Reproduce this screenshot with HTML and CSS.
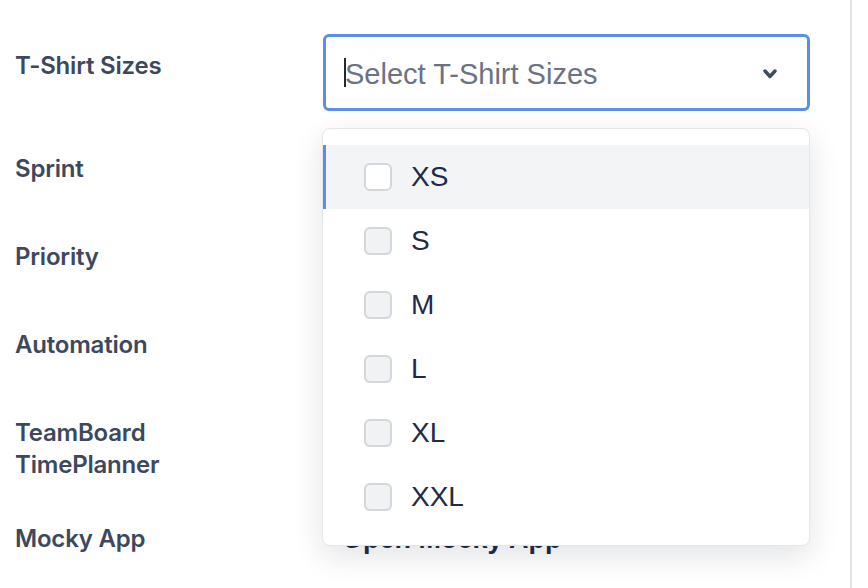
FILE: index.html
```html
<!DOCTYPE html>
<html>
<head>
<meta charset="utf-8">
<link rel="stylesheet" href="styles.css">
</head>
<body>
<div class="page">
  <div class="form">
    <div class="row">
      <div class="label">T-Shirt Sizes</div>
      <div class="field">
        <div class="select">
          <span class="caret"></span>
          <span class="placeholder">Select T-Shirt Sizes</span>
          <svg class="chevron" width="14" height="10" viewBox="0 0 14 10"><path d="M2 2 L7 7.5 L12 2" fill="none" stroke="#3d4a62" stroke-width="3.4" stroke-linecap="round" stroke-linejoin="round"/></svg>
        </div>
        <div class="menu">
          <div class="option active"><span class="box"></span><span class="opt-text">XS</span></div>
          <div class="option"><span class="box"></span><span class="opt-text">S</span></div>
          <div class="option"><span class="box"></span><span class="opt-text">M</span></div>
          <div class="option"><span class="box"></span><span class="opt-text">L</span></div>
          <div class="option"><span class="box"></span><span class="opt-text">XL</span></div>
          <div class="option"><span class="box"></span><span class="opt-text">XXL</span></div>
        </div>
      </div>
    </div>
    <div class="row">
      <div class="label">Sprint</div>
      <div class="field"><div class="blank"></div></div>
    </div>
    <div class="row">
      <div class="label">Priority</div>
      <div class="field"><div class="blank"></div></div>
    </div>
    <div class="row">
      <div class="label">Automation</div>
      <div class="field"><div class="blank"></div></div>
    </div>
    <div class="row">
      <div class="label">TeamBoard<br>TimePlanner</div>
      <div class="field"><div class="blank"></div></div>
    </div>
    <div class="row">
      <div class="label">Mocky App</div>
      <div class="field"><div class="link">Open Mocky App</div></div>
    </div>
  </div>
</div>
</body>
</html>
```

FILE: styles.css
```css
html, body {
  margin: 0;
  padding: 0;
  background: #ffffff;
}
body {
  width: 868px;
  height: 588px;
  overflow: hidden;
}
.page {
  width: 850px;
  height: 588px;
  border-right: 2px solid #e2e2e2;
  box-sizing: content-box;
}
.form {
  padding: 34px 0 0 15px;
}
.row {
  display: grid;
  grid-template-columns: 308px 487px;
  align-items: start;
  margin-bottom: 26px;
}
.label {
  padding-top: 16px;
  font-family: Inter, "Liberation Sans", sans-serif;
  font-weight: 600;
  font-size: 24px;
  line-height: 32px;
  color: #3d485d;
  letter-spacing: -0.2px;
}
.field {
  position: relative;
}
.select {
  box-sizing: border-box;
  height: 77px;
  border: 3px solid #5b8ee6;
  border-radius: 6px;
  display: flex;
  align-items: center;
  padding-left: 18px;
  background: #fff;
}
.caret {
  width: 2px;
  height: 29px;
  background: #1f2937;
  margin-right: -1px;
}
.placeholder {
  flex: 1;
  font-family: "Liberation Sans", Arial, sans-serif;
  font-size: 29px;
  color: #6b7284;
  line-height: 32px;
  margin-top: 2px;
}
.chevron {
  margin-right: 30px;
  margin-top: 2px;
}
.menu {
  position: absolute;
  top: calc(100% + 17px);
  left: -1px;
  width: 488px;
  box-sizing: border-box;
  background: #fff;
  border: 1px solid #e4e6ea;
  border-radius: 8px;
  padding: 16px 0;
  box-shadow: 0 10px 30px rgba(17, 24, 39, 0.12);
  z-index: 10;
}
.option {
  height: 64px;
  display: flex;
  align-items: center;
  padding-left: 41px;
}
.option.active {
  background: #f3f4f6;
  box-shadow: inset 3px 0 0 #5b8ee6;
}
.box {
  box-sizing: border-box;
  width: 28px;
  height: 28px;
  border: 2px solid #d3d6da;
  border-radius: 6px;
  background: #f1f2f4;
  margin-right: 19px;
}
.option.active .box {
  background: #ffffff;
}
.opt-text {
  font-family: "Liberation Sans", Arial, sans-serif;
  font-size: 28px;
  color: #1f2a48;
  line-height: 32px;
}
.blank {
  height: 62px;
}
.link {
  padding: 16px 0 0 19px;
  font-family: "Liberation Sans", Arial, sans-serif;
  font-weight: 700;
  font-size: 27px;
  line-height: 32px;
  color: #1f2a48;
}
```
